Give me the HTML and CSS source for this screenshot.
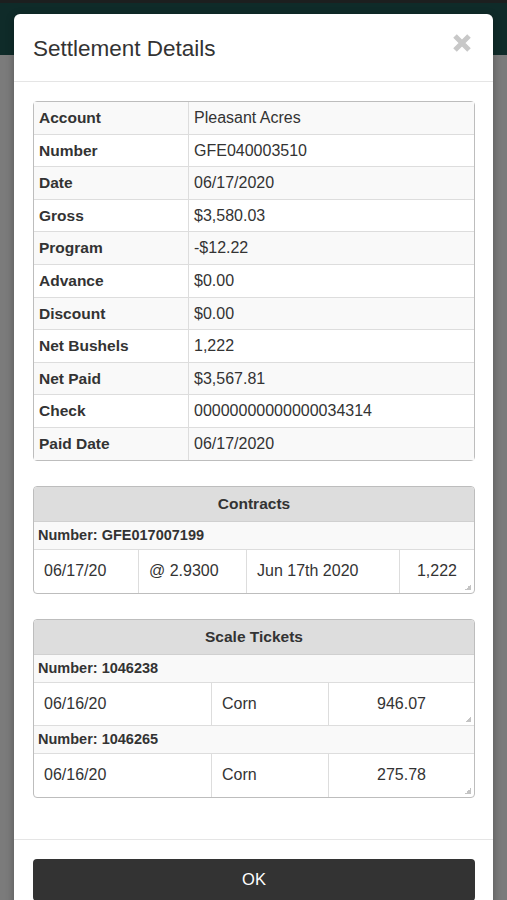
FILE: index.html
```html
<!DOCTYPE html>
<html lang="en">
<head>
	<meta charset="UTF-8">
	<title>Settlement Details</title>
	<link rel="stylesheet" href="styles.css">
</head>
<body>
	<div class="topbar"></div>
	<div class="modal">
		<div class="modal-header">
			<h4 class="modal-title">Settlement Details</h4>
			<span class="close">
				<svg width="20" height="20" viewBox="0 0 20 20">
					<path d="M3 3L17 17M17 3L3 17" stroke="#c8c8c8" stroke-width="5" fill="none"/>
				</svg>
			</span>
		</div>
		<div class="modal-body">
			<table class="details">
				<tr><th>Account</th><td>Pleasant Acres</td></tr>
				<tr><th>Number</th><td>GFE040003510</td></tr>
				<tr><th>Date</th><td>06/17/2020</td></tr>
				<tr><th>Gross</th><td>$3,580.03</td></tr>
				<tr><th>Program</th><td>-$12.22</td></tr>
				<tr><th>Advance</th><td>$0.00</td></tr>
				<tr><th>Discount</th><td>$0.00</td></tr>
				<tr><th>Net Bushels</th><td>1,222</td></tr>
				<tr><th>Net Paid</th><td>$3,567.81</td></tr>
				<tr><th>Check</th><td>00000000000000034314</td></tr>
				<tr><th>Paid Date</th><td>06/17/2020</td></tr>
			</table>

			<table class="group contracts">
				<tr><th class="caption" colspan="4">Contracts</th></tr>
				<tr><td class="num" colspan="4">Number: GFE017007199</td></tr>
				<tr class="data">
					<td class="c1">06/17/20</td>
					<td class="c2">@ 2.9300</td>
					<td class="c3">Jun 17th 2020</td>
					<td class="last">1,222</td>
				</tr>
			</table>

			<table class="group tickets">
				<tr><th class="caption" colspan="3">Scale Tickets</th></tr>
				<tr><td class="num" colspan="3">Number: 1046238</td></tr>
				<tr class="data">
					<td class="t1">06/16/20</td>
					<td class="t2">Corn</td>
					<td class="last">946.07</td>
				</tr>
				<tr><td class="num" colspan="3">Number: 1046265</td></tr>
				<tr class="data">
					<td class="t1">06/16/20</td>
					<td class="t2">Corn</td>
					<td class="last">275.78</td>
				</tr>
			</table>
		</div>
		<div class="modal-footer">
			<button class="btn-ok">OK</button>
		</div>
	</div>
</body>
</html>
```

FILE: styles.css
```css
*{
	padding:0;
	margin:0;
	box-sizing:border-box;
}
body{
	background:#7b7b7b;
	font-family:"Liberation Sans", Arial, sans-serif;
	color:#333;
	height:900px;
	overflow:hidden;
}
.topbar{
	height:55px;
	background:#0f2b29;
	border-top:3px solid #1c1f1f;
}
.modal{
	position:absolute;
	top:14px;
	left:14px;
	width:479px;
	background:#fff;
	border-radius:6px 6px 0 0;
	box-shadow:0 2px 8px rgba(0,0,0,0.3);
}
.modal-header{
	height:68px;
	padding:0 21px 0 19px;
	border-bottom:1px solid #e5e5e5;
	display:flex;
	align-items:center;
	justify-content:space-between;
}
.modal-title{
	font-size:22.5px;
	font-weight:normal;
	color:#333;
	margin-top:2px;
}
.close{
	display:block;
	height:20px;
	margin-top:-10px;
}
.modal-body{
	padding:19px 18px 41px 19px;
}
table{
	width:100%;
	border-collapse:separate;
	border-spacing:0;
	border:1px solid #bdbdbd;
	border-radius:4px;
	font-size:16px;
}
.details th,
.details td{
	text-align:left;
	padding:6px 5px 6px 5px;
	line-height:19.6px;
	border-bottom:1px solid #ddd;
}
.details th{
	width:155px;
	font-size:15.5px;
	border-right:1px solid #ddd;
}
.details tr:nth-child(odd){
	background:#f9f9f9;
}
.details tr:last-child th,
.details tr:last-child td{
	border-bottom:none;
}
.group{
	margin-top:25px;
}
.group .caption{
	background:#ddd;
	height:35px;
	font-size:15.5px;
	text-align:center;
	border-bottom:1px solid #d0d0d0;
	border-radius:3px 3px 0 0;
}
.group .num{
	background:#f9f9f9;
	font-weight:bold;
	font-size:14.5px;
	height:28px;
	padding:0 4px;
	border-bottom:1px solid #ddd;
}
.group .data td{
	height:43px;
	padding:0 10px;
	font-size:16px;
	border-right:1px solid #ddd;
	border-bottom:1px solid #ddd;
}
.group tr:last-child td{
	border-bottom:none;
}
.group .data td.last{
	border-right:none;
	text-align:center;
	position:relative;
}
.group .data td.last:after{
	content:"";
	position:absolute;
	right:3px;
	bottom:3px;
	width:6px;
	height:6px;
	background:linear-gradient(135deg, transparent 50%, #c4c4c4 50%);
}
.c1{width:105px;}
.c2{width:108px;}
.c3{width:153px;}
.t1{width:178px;}
.t2{width:117px;}
.modal-footer{
	border-top:1px solid #e5e5e5;
	padding:19px 18px 20px 19px;
}
.btn-ok{
	display:block;
	width:100%;
	height:42px;
	border:none;
	background:#333;
	color:#fff;
	font-family:"Liberation Sans", Arial, sans-serif;
	font-size:16.5px;
	border-radius:4px;
	outline:none;
}
```
